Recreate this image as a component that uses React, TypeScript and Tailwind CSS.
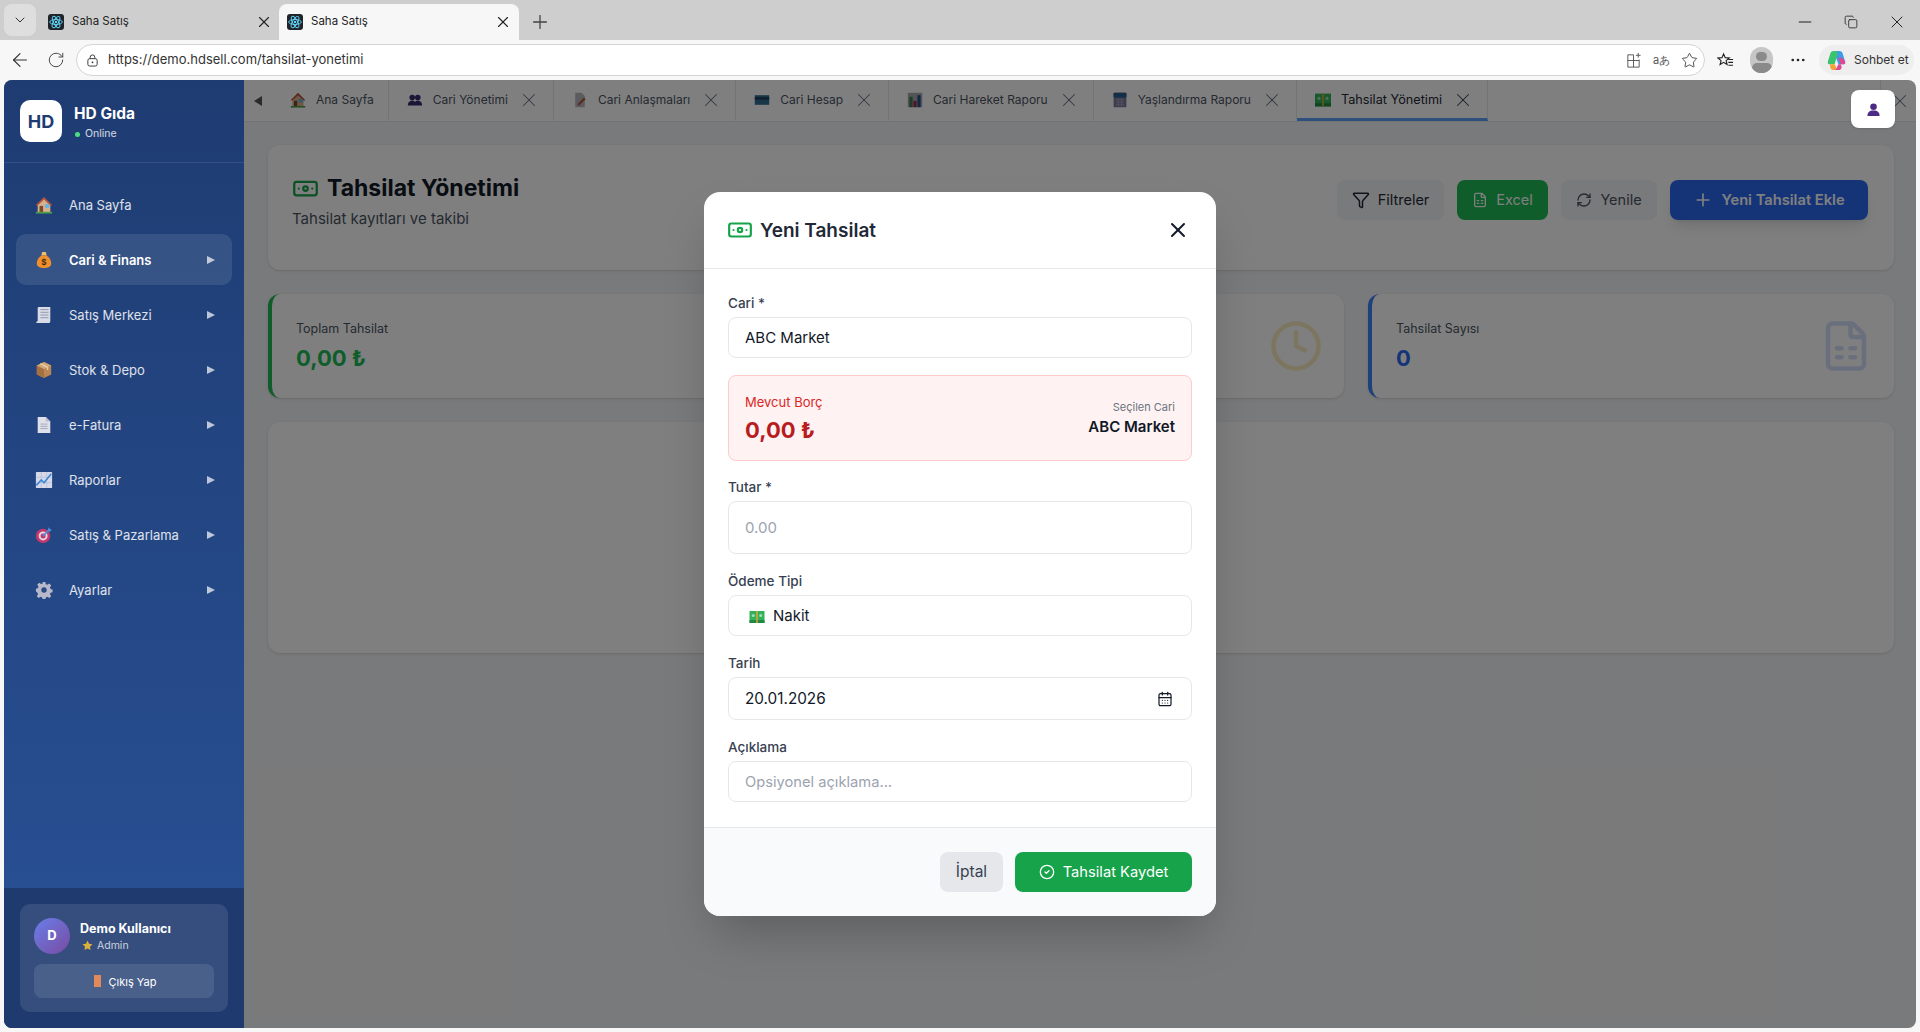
import type { ReactNode } from 'react';
import {
  ArrowLeft,
  Banknote,
  CalendarDays,
  ChevronDown,
  CircleCheck,
  Clock,
  Copy,
  FileSpreadsheet,
  Funnel,
  Minus,
  MoreHorizontal,
  Plus,
  RefreshCw,
  RotateCw,
  Star,
  X,
} from 'lucide-react';

/* small hand drawn pictures for the emoji used in the app */
function House() {
  return (
    <svg viewBox="0 0 20 20" className="w-full h-full">
      <path d="M3 9 10 2l7 7v9H3z" fill="#d9b08c" />
      <path d="M1 10 10 1l9 9-1.500 1L10 4 2.500 11z" fill="#b5533c" />
      <rect x="5" y="11" width="4" height="7" fill="#7a4a2c" />
      <circle cx="13.500" cy="11" r="2.500" fill="#5fb7e5" />
      <rect x="1" y="17.500" width="18" height="2" fill="#4f9d4a" />
    </svg>
  );
}
function MoneyBag() {
  return (
    <svg viewBox="0 0 20 20" className="w-full h-full">
      <path d="M7 5h6l-1-4H8z" fill="#f0c068" />
      <path d="M7 5C3 8 2 11 2 14c0 4 4 5 8 5s8-1 8-5c0-3-1-6-5-9z" fill="#f0902c" />
      <text x="10" y="15.500" textAnchor="middle" fontSize="9" fontWeight="700" fill="#4a2b10" fontFamily="Inter, sans-serif">$</text>
    </svg>
  );
}
function Receipt() {
  return (
    <svg viewBox="0 0 20 20" className="w-full h-full">
      <path d="M4 1h13v16c0 1.500-1 2-2 2H2c-1 0-1-2 1-2V2z" fill="#d9dbe6" />
      <path d="M6 4h9M6 7h9M6 10h9M6 13h9" stroke="#8d92a8" strokeWidth="1" />
    </svg>
  );
}
function Box() {
  return (
    <svg viewBox="0 0 20 20" className="w-full h-full">
      <path d="M10 1 2 5v10l8 4 8-4V5z" fill="#b98755" />
      <path d="M10 9 2 5v10l8 4z" fill="#a5703f" />
      <path d="M10 1 18 5l-8 4-8-4z" fill="#d2a578" />
      <path d="m6 3 8 4v3" stroke="#e8cfa8" strokeWidth="1.500" fill="none" />
    </svg>
  );
}
function PageIcon() {
  return (
    <svg viewBox="0 0 20 20" className="w-full h-full">
      <path d="M3 1h9l5 5v13H3z" fill="#dfe0ea" />
      <path d="M12 1l5 5h-5z" fill="#b9bccd" />
      <path d="M6 9h8M6 11.500h8M6 14h8" stroke="#9fa3b8" strokeWidth="1" />
    </svg>
  );
}
function ChartUp() {
  return (
    <svg viewBox="0 0 20 20" className="w-full h-full">
      <rect x="1" y="1" width="18" height="18" rx="1" fill="#d6d9e8" />
      <path d="M7 1v18M13 1v18M1 7h18M1 13h18" stroke="#b6bbd2" strokeWidth=".7" />
      <path d="M1.500 16 7 10l3 3 8-10" stroke="#3e86d9" strokeWidth="1.800" fill="none" />
    </svg>
  );
}
function Target() {
  return (
    <svg viewBox="0 0 20 20" className="w-full h-full">
      <circle cx="9" cy="11" r="8" fill="#c4386f" />
      <circle cx="9" cy="11" r="5" fill="#e8d5de" />
      <circle cx="9" cy="11" r="2.800" fill="#c4386f" />
      <path d="m9 11 8-8" stroke="#4a90d9" strokeWidth="1.800" />
      <path d="m15 1 1 3 3 .5-3 2-2-1z" fill="#4a90d9" />
    </svg>
  );
}
function Gear() {
  return (
    <svg viewBox="0 0 20 20" className="w-full h-full">
      <path
        d="M8.500 1h3l.5 2.500 1.700.7 2.200-1.400 2.100 2.100-1.400 2.200.7 1.700 2.200.7v3l-2.200.5-.7 1.700 1.400 2.200-2.100 2.100-2.200-1.400-1.700.7-.5 2.200h-3l-.5-2.200-1.700-.7-2.200 1.400-2.100-2.100 1.400-2.200-.7-1.700L1 11.500v-3l2.200-.5.7-1.700-1.400-2.200 2.100-2.100 2.200 1.400 1.700-.7z"
        fill="#b7b9c9"
      />
      <circle cx="10" cy="10" r="3" fill="#2a4a87" />
    </svg>
  );
}
function People() {
  return (
    <svg viewBox="0 0 20 20" className="w-full h-full">
      <circle cx="6.500" cy="7" r="3.500" fill="#3a2a6e" />
      <circle cx="13.500" cy="7" r="3.500" fill="#3a2a6e" />
      <path d="M1 17c0-4 2-6 5.500-6S11 13 11 17zM9 17c0-4 1-6 4.500-6s5.500 2 5.500 6z" fill="#3a2a6e" />
    </svg>
  );
}
function Memo() {
  return (
    <svg viewBox="0 0 20 20" className="w-full h-full">
      <path d="M4 1h8l4 4v14H4z" fill="#b8b8c0" />
      <path d="m7 15 8-8 2 2-8 8H7z" fill="#b35a3c" />
    </svg>
  );
}
function CardIcon() {
  return (
    <svg viewBox="0 0 20 14" className="w-full h-full">
      <rect x="1" y="1" width="18" height="12" fill="#2e6f92" />
      <rect x="1" y="3.500" width="18" height="3" fill="#1c3d58" />
    </svg>
  );
}
function Bars() {
  return (
    <svg viewBox="0 0 20 20" className="w-full h-full">
      <rect x="1" y="1" width="18" height="18" fill="#a5a8ab" />
      <rect x="3" y="6" width="4" height="13" fill="#3d7a50" />
      <rect x="8" y="11" width="4" height="8" fill="#9c2a45" />
      <rect x="13" y="4" width="4" height="15" fill="#2a4e8c" />
    </svg>
  );
}
function CalendarEmoji() {
  return (
    <svg viewBox="0 0 20 20" className="w-full h-full">
      <rect x="2" y="1" width="16" height="18" rx="1" fill="#7d7a9a" />
      <rect x="2" y="1" width="16" height="6" rx="1" fill="#2b5c8f" />
      <path d="M5 10h10M5 13h10M5 16h10M8 8v10M12 8v10" stroke="#a9a6c4" strokeWidth="1" />
    </svg>
  );
}
function Cash() {
  return (
    <svg viewBox="0 0 20 16" className="w-full h-full">
      <rect x="0" y="0" width="20" height="16" fill="#35b05a" />
      <rect x="0" y="12" width="20" height="4" fill="#1f8a42" />
      <rect x="9" y="0" width="2" height="16" fill="#d9a83a" />
      <circle cx="5" cy="6" r="2" fill="#9be0ae" />
      <circle cx="15" cy="6" r="2" fill="#9be0ae" />
    </svg>
  );
}
function StarEmoji() {
  return (
    <svg viewBox="0 0 20 20" className="w-full h-full">
      <path d="m10 1 2.800 5.800 6.200.9-4.500 4.400 1.100 6.300L10 15.400l-5.600 3 1.100-6.300L1 7.700l6.200-.9z" fill="#d9b23c" />
    </svg>
  );
}
function Atom() {
  return (
    <svg viewBox="0 0 16 16" className="w-4 h-4 shrink-0">
      <rect width="16" height="16" rx="3" fill="#20232a" />
      <g fill="none" stroke="#61dafb" strokeWidth=".9">
        <ellipse cx="8" cy="8" rx="6.300" ry="2.500" />
        <ellipse cx="8" cy="8" rx="6.300" ry="2.500" transform="rotate(60 8 8)" />
        <ellipse cx="8" cy="8" rx="6.300" ry="2.500" transform="rotate(120 8 8)" />
      </g>
      <circle cx="8" cy="8" r="1.200" fill="#61dafb" />
    </svg>
  );
}
function CopilotLogo() {
  return (
    <svg viewBox="0 0 24 24" className="w-[23px] h-[23px] shrink-0">
      <path d="M9 2h6c2 0 3 1 3.500 3L21 13c.5 2-1 3-2.500 3H14z" fill="#3f9be8" />
      <path d="M9 2c-2 0-3 1-3.500 3L3 13c-.5 2 .5 3 2 3h5l3-10c.5-2 1-4-4-4z" fill="#39c46d" />
      <path d="M5 16h5l2 4c.5 1-.5 2-2 2H9c-2 0-3-1-3.500-3z" fill="#f2a43a" />
      <path d="M14 9h4l3 4c.7 2-.5 3-2 3h-5l-2 4c-.5 1-1.500 2-3 2h5c2 0 3-1 3.500-3z" fill="#e0488f" />
    </svg>
  );
}

function BrowserChrome() {
  return (
    <div className="shrink-0">
      <div className="h-10 bg-[#cecece] flex items-end pl-1 pr-2 relative">
        <div className="w-8 h-8 mb-1 rounded-lg bg-[#dedede] flex items-center justify-center">
          <ChevronDown className="w-4 h-4 text-[#333]" strokeWidth={1.5} />
        </div>
        <div className="w-[243px] h-9 flex items-center pl-3 pr-[6px] gap-2 text-[11.500px] leading-[14px] text-[#222]">
          <Atom />
          <span className="flex-1 pb-[2px]">Saha Satış</span>
          <X className="w-[18px] h-[18px] text-[#222]" strokeWidth={1.5} />
        </div>
        <div className="w-[240px] h-9 flex items-center pl-2 pr-[7px] gap-2 text-[11.500px] leading-[14px] text-[#222] bg-[#f7f7f7] rounded-t-lg">
          <Atom />
          <span className="flex-1 pb-[2px]">Saha Satış</span>
          <X className="w-[18px] h-[18px] text-[#222]" strokeWidth={1.5} />
        </div>
        <div className="h-9 w-10 flex items-center justify-center ml-[1px]">
          <Plus className="w-[22px] h-[22px] text-[#444]" strokeWidth={1.4} />
        </div>
        <div className="ml-auto h-9 flex items-center gap-[29px] pr-[5px] text-[#222]">
          <Minus className="w-5 h-5" strokeWidth={1.2} />
          <Copy className="w-[14px] h-[14px]" strokeWidth={1.4} />
          <X className="w-5 h-5" strokeWidth={1.2} />
        </div>
      </div>
      <div className="h-10 bg-[#f7f7f7] flex items-center pl-[9px]">
        <ArrowLeft className="w-[22px] h-[22px] text-[#333] shrink-0" strokeWidth={1.3} />
        <RotateCw className="w-[18px] h-[18px] text-[#444] ml-4 shrink-0" strokeWidth={1.3} />
        <div className="ml-[11px] w-[1629px] shrink-0 h-8 rounded-full bg-white border border-[#d4d4d4] flex items-center pl-[9px] pr-[6px]">
          <svg viewBox="0 0 14 14" className="w-[13px] h-[13px] text-[#333]">
            <rect x="2" y="5" width="10" height="8" rx="2" fill="none" stroke="currentColor" />
            <path d="M4.500 5V3.500a2.500 2.500 0 0 1 5 0V5" fill="none" stroke="currentColor" />
            <circle cx="7" cy="9" r="1" fill="currentColor" />
          </svg>
          <span className="ml-[9px] text-[13px] text-[#333]">https://demo.hdsell.com/tahsilat-yonetimi</span>
          <div className="ml-auto flex items-center gap-[11px] text-[#555]">
            <svg viewBox="0 0 18 18" className="w-[17px] h-[17px]" fill="none" stroke="currentColor" strokeWidth="1">
              <path d="M9 3H3v13h12V8M3 9h12M9 3v13M14 1v5M11.500 3.500h5" />
            </svg>
            <span className="w-[17px] text-[11px] leading-none whitespace-nowrap">aあ</span>
            <Star className="w-[17px] h-[17px] text-[#333]" strokeWidth={1.2} />
          </div>
        </div>
        <div className="ml-[12px] flex items-center text-[#222] shrink-0">
          <svg viewBox="0 0 18 18" className="w-[17px] h-[17px]" fill="none" stroke="currentColor" strokeWidth="1.200">
            <path d="m7 2 1.700 4 4.300.3-3.300 2.800 1 4.200L7 11l-3.700 2.300 1-4.200L1 6.300 5.300 6zM12 8h5M12 11h5M12 14h5" />
          </svg>
          <div className="ml-[16px] w-[23px] h-[26px] rounded-full bg-[#c6c6c6] overflow-hidden flex flex-col items-center">
            <div className="w-[11px] h-[11px] rounded-full bg-[#8a8a8a] mt-[5px]" />
            <div className="w-[20px] h-[12px] rounded-full bg-[#8a8a8a] mt-[2px]" />
          </div>
          <MoreHorizontal className="w-[18px] h-[18px] ml-4" strokeWidth={1.6} />
          <div className="ml-3 w-[95px] h-[30px] rounded-full bg-[#eeeeee] flex items-center pl-[6px] gap-[6px] text-[12px] text-[#333]">
            <CopilotLogo />
            <span>Sohbet et</span>
          </div>
        </div>
      </div>
    </div>
  );
}

const navItems: { label: string; icon: ReactNode; arrow?: boolean; active?: boolean }[] = [
  { label: 'Ana Sayfa', icon: <House /> },
  { label: 'Cari & Finans', icon: <MoneyBag />, arrow: true, active: true },
  { label: 'Satış Merkezi', icon: <Receipt />, arrow: true },
  { label: 'Stok & Depo', icon: <Box />, arrow: true },
  { label: 'e-Fatura', icon: <PageIcon />, arrow: true },
  { label: 'Raporlar', icon: <ChartUp />, arrow: true },
  { label: 'Satış & Pazarlama', icon: <Target />, arrow: true },
  { label: 'Ayarlar', icon: <Gear />, arrow: true },
];

function Sidebar() {
  return (
    <aside className="relative z-50 w-60 shrink-0 flex flex-col bg-gradient-to-b from-[#1e3c72] to-[#2a5298] text-white">
      <div className="h-[83px] shrink-0 flex items-start gap-3 pl-4 pt-5 border-b border-white/10">
        <div className="w-[42px] h-[42px] rounded-[10px] bg-white flex items-center justify-center text-[18px] font-bold text-[#1e3c72]">
          HD
        </div>
        <div className="pt-1">
          <div className="text-[15.500px] leading-[19px] font-bold">HD Gıda</div>
          <div className="flex items-center gap-[5px] pl-[1px] mt-[3px] text-[10.5px] leading-[16px] text-white/80">
            <span className="w-[5px] h-[5px] rounded-full bg-[#4ade80]" />
            Online
          </div>
        </div>
      </div>

      <nav className="flex-1 px-3 pt-4 flex flex-col gap-1">
        {navItems.map((item) => (
          <div
            key={item.label}
            className={`h-[51px] rounded-[10px] flex items-center pl-[19px] pr-[17px] ${
              item.active ? 'bg-white/10 font-semibold text-white' : 'text-white/85'
            }`}
          >
            <span className="w-[18px] h-[18px] shrink-0">{item.icon}</span>
            <span className="ml-[16px] flex-1 text-[13px] pt-[2px]">{item.label}</span>
            {item.arrow && (
              <svg viewBox="0 0 8 8" className="w-2 h-2 text-white/70">
                <path d="M0 0 8 4 0 8z" fill="currentColor" />
              </svg>
            )}
          </div>
        ))}
      </nav>

      <div className="h-[140px] shrink-0 bg-[#1e3a6f] px-4 pt-4">
        <div className="h-[108px] rounded-[10px] bg-white/10 p-[14px]">
          <div className="flex items-center gap-[10px]">
            <div className="w-9 h-9 rounded-full bg-gradient-to-br from-[#667eea] to-[#764ba2] flex items-center justify-center text-[13px] font-bold">
              D
            </div>
            <div>
              <div className="text-[12.500px] leading-[18px] font-bold">Demo Kullanıcı</div>
              <div className="flex items-center gap-[4px] text-[10.5px] leading-[15px] text-white/75 pl-[2px]">
                <span className="w-[11px] h-[11px]"><StarEmoji /></span>
                Admin
              </div>
            </div>
          </div>
          <div className="mt-[10px] h-[34px] rounded-lg bg-white/10 flex items-center justify-center gap-[8px] text-[11px] pl-[2px]">
            <span className="w-[7px] h-3 bg-[#e08a5c]" />
            <span className="pt-[2px]">Çıkış Yap</span>
          </div>
        </div>
      </div>
    </aside>
  );
}

const appTabs: { label: string; icon: ReactNode; close: boolean; active?: boolean }[] = [
  { label: 'Ana Sayfa', icon: <House />, close: false },
  { label: 'Cari Yönetimi', icon: <People />, close: true },
  { label: 'Cari Anlaşmaları', icon: <Memo />, close: true },
  { label: 'Cari Hesap', icon: <CardIcon />, close: true },
  { label: 'Cari Hareket Raporu', icon: <Bars />, close: true },
  { label: 'Yaşlandırma Raporu', icon: <CalendarEmoji />, close: true },
  { label: 'Tahsilat Yönetimi', icon: <Cash />, close: true, active: true },
];

function TabBar() {
  return (
    <div className="h-[42px] shrink-0 bg-white border-b border-[#e5e7eb] flex items-stretch">
      <div className="w-7 flex items-center justify-center">
        <svg viewBox="0 0 8 10" className="w-2 h-[10px] text-[#555]">
          <path d="M8 0 0 5l8 5z" fill="currentColor" />
        </svg>
      </div>
      {appTabs.map((tab) => (
        <div
          key={tab.label}
          className={`flex items-center pl-[18px] border-r border-b-[3px] border-r-[#e5e7eb] pt-[2px] ${
            tab.close ? 'pr-[18px]' : 'pr-[14px]'
          } ${tab.active ? 'border-b-[#5aa0f8] text-[#1f2937] text-[12.700px]' : 'border-b-transparent text-[#4b5563] text-[12px]'}`}
        >
          <span className="w-4 h-4 shrink-0 flex items-center">{tab.icon}</span>
          <span className="ml-[10px]">{tab.label}</span>
          {tab.close && (
            <X
              className={`w-[22px] h-[22px] ml-[10px] -mr-[5px] ${tab.active ? 'text-[#374151]' : 'text-[#6b7280]'}`}
              strokeWidth={1.1}
            />
          )}
        </div>
      ))}
      <div className="flex-1" />
      <div className="border-l border-[#e5e7eb] w-9 flex items-center justify-end pr-[5px]">
        <X className="w-[22px] h-[22px] text-[#6b7280]" strokeWidth={1.1} />
      </div>
    </div>
  );
}

function StatCard({ label, value, border, color, icon }: { label: string; value: string; border: string; color: string; icon: ReactNode }) {
  return (
    <div className={`h-[104px] rounded-xl bg-white border-l-4 ${border} pl-6 pr-[21px] flex items-center justify-between shadow-sm`}>
      <div className="pt-[1px]">
        <div className="text-[12.500px] leading-5 text-[#4b5563]">{label}</div>
        <div className={`text-[22px] leading-8 font-bold mt-[3px] ${color}`}>{value}</div>
      </div>
      {icon}
    </div>
  );
}

function PageContent() {
  return (
    <div className="flex-1 bg-[#f3f4f6] pt-[23px] pl-6 pr-[22px] overflow-hidden">
      <div className="h-[125px] rounded-xl bg-white pl-6 pr-[26px] pt-[27px] flex items-start justify-between shadow-sm">
        <div>
          <div className="flex items-center gap-[8px]">
            <Banknote className="w-[27px] h-[27px] text-[#16a34a]" strokeWidth={2} />
            <h1 className="text-[23px] leading-8 font-bold text-[#111827]">Tahsilat Yönetimi</h1>
          </div>
          <p className="text-[15px] leading-6 text-[#4b5563] mt-[3px]">Tahsilat kayıtları ve takibi</p>
        </div>
        <div className="flex items-center gap-[13px] pt-[8px]">
          <button className="h-10 w-[107px] rounded-lg bg-[#f3f4f6] flex items-center justify-center gap-2 text-[14.500px] text-[#1f2937]">
            <Funnel className="w-[18px] h-[18px]" strokeWidth={2} />
            Filtreler
          </button>
          <button className="h-10 w-[91px] rounded-lg bg-[#1dba56] flex items-center justify-center gap-2 text-[14.500px] text-white">
            <FileSpreadsheet className="w-4 h-4" strokeWidth={2} />
            Excel
          </button>
          <button className="h-10 w-[96px] rounded-lg bg-[#f3f4f6] flex items-center justify-center gap-2 text-[14.500px] text-[#4b5563]">
            <RefreshCw className="w-4 h-4" strokeWidth={2} />
            Yenile
          </button>
          <button className="h-10 w-[198px] rounded-lg bg-[#2a68f0] flex items-center justify-center gap-2 text-[14.700px] font-semibold text-white shadow-lg">
            <Plus className="w-5 h-5" strokeWidth={2} />
            Yeni Tahsilat Ekle
          </button>
        </div>
      </div>

      <div className="grid grid-cols-3 gap-6 mt-6">
        <StatCard label="Toplam Tahsilat" value="0,00 ₺" border="border-l-[#1dba56]" color="text-[#1dba56]" icon={null} />
        <StatCard
          label="Bekleyen"
          value="0,00 ₺"
          border="border-l-[#eab308]"
          color="text-[#ca8a04]"
          icon={<Clock className="w-[54px] h-[54px] text-[#eab308] opacity-25" strokeWidth={2} />}
        />
        <StatCard
          label="Tahsilat Sayısı"
          value="0"
          border="border-l-[#3b82f6]"
          color="text-[#2a68f0]"
          icon={<FileSpreadsheet className="w-[54px] h-[54px] text-[#2563eb] opacity-20" strokeWidth={2} />}
        />
      </div>

      <div className="h-[231px] rounded-xl bg-white mt-6 shadow-sm" />
    </div>
  );
}

function Field({ label, children }: { label: string; children: ReactNode }) {
  return (
    <div>
      <div className="text-[13.500px] leading-5 font-medium text-[#374151] mb-1">{label}</div>
      {children}
    </div>
  );
}

function CollectionModal() {
  return (
    <div className="absolute inset-0 z-40 bg-black/50 flex items-center justify-center">
      <div className="w-[512px] rounded-2xl bg-white shadow-2xl overflow-hidden">
        <div className="h-[77px] border-b border-[#e5e7eb] pl-[23px] pr-[26px] flex items-center justify-between">
          <div className="flex items-center gap-[7px]">
            <Banknote className="w-[26px] h-[26px] text-[#16a34a]" strokeWidth={2} />
            <h2 className="text-[19px] leading-7 font-semibold text-[#1f2937] pt-[2px]">Yeni Tahsilat</h2>
          </div>
          <X className="w-6 h-6 text-[#111827]" strokeWidth={2} />
        </div>

        <div className="px-6 pt-6 pb-[25px] flex flex-col">
          <Field label="Cari *">
            <div className="h-[41px] rounded-lg border border-[#e5e7eb] px-4 pt-[2px] flex items-center text-[15px] text-[#111827]">ABC Market</div>
          </Field>
          <div className="mt-[17px] h-[86px] rounded-lg border border-[#fecaca] bg-[#fef2f2] px-4 pt-[2px] flex items-center justify-between">
            <div>
              <div className="text-[13px] leading-5 text-[#dc2626]">Mevcut Borç</div>
              <div className="text-[22px] leading-8 font-bold text-[#b91c1c] mt-[2px]">0,00 ₺</div>
            </div>
            <div className="text-right">
              <div className="text-[11px] leading-4 text-[#6b7280]">Seçilen Cari</div>
              <div className="text-[15px] leading-6 font-semibold text-[#111827]">ABC Market</div>
            </div>
          </div>
          <div className="mt-[16px]">
            <Field label="Tutar *">
              <div className="h-[53px] rounded-lg border border-[#e5e7eb] px-4 pt-[2px] flex items-center text-[15px] text-[#9ca3af]">0.00</div>
            </Field>
          </div>
          <div className="mt-[17px]">
            <Field label="Ödeme Tipi">
              <div className="h-[41px] rounded-lg border border-[#e5e7eb] pl-5 pt-[2px] flex items-center text-[15px] text-[#111827]">
                <span className="w-4 h-3 mr-2 flex items-center"><Cash /></span>
                Nakit
              </div>
            </Field>
          </div>
          <div className="mt-[17px]">
            <Field label="Tarih">
              <div className="h-[43px] rounded-lg border border-[#e5e7eb] pl-4 pr-[18px] flex items-center justify-between text-[15.300px] text-[#111827]">
                <span className="pt-[2px]">20.01.2026</span>
                <CalendarDays className="w-4 h-4 text-[#111827]" strokeWidth={1.8} />
              </div>
            </Field>
          </div>
          <div className="mt-[17px]">
            <Field label="Açıklama">
              <div className="h-[41px] rounded-lg border border-[#e5e7eb] px-4 pt-[2px] flex items-center text-[14.700px] text-[#9ca3af]">Opsiyonel açıklama...</div>
            </Field>
          </div>
        </div>

        <div className="h-[89px] bg-[#f9fafb] border-t border-[#e5e7eb] px-6 flex items-center justify-end gap-3">
          <button className="h-10 w-[63px] rounded-lg bg-[#e5e7eb] text-[15.500px] text-[#374151]">İptal</button>
          <button className="h-10 w-[177px] rounded-lg bg-[#16a34a] flex items-center justify-center gap-2 text-[14.700px] text-white">
            <CircleCheck className="w-4 h-4" strokeWidth={2} />
            Tahsilat Kaydet
          </button>
        </div>
      </div>
    </div>
  );
}

export default function App() {
  return (
    <div className="h-screen flex flex-col bg-[#f7f7f7] overflow-hidden font-['Inter',sans-serif]">
      <BrowserChrome />
      <div className="flex-1 px-1 pb-1 min-h-0">
        <div className="relative h-full rounded-lg overflow-hidden flex">
          <Sidebar />
          <main className="flex-1 min-w-0 flex flex-col">
            <TabBar />
            <PageContent />
          </main>
          <CollectionModal />
          {/* profile button sits over the tab bar */}
          <button className="absolute z-50 top-[10px] right-[21px] w-[44px] h-[38px] rounded-lg bg-white shadow-sm flex items-center justify-center">
            <svg viewBox="0 0 16 16" className="w-[15px] h-[15px]">
              <circle cx="8" cy="5" r="3.500" fill="#4c2a85" />
              <path d="M1.500 15c0-4 2-6 6.500-6s6.500 2 6.500 6z" fill="#4c2a85" />
            </svg>
          </button>
        </div>
      </div>
    </div>
  );
}
